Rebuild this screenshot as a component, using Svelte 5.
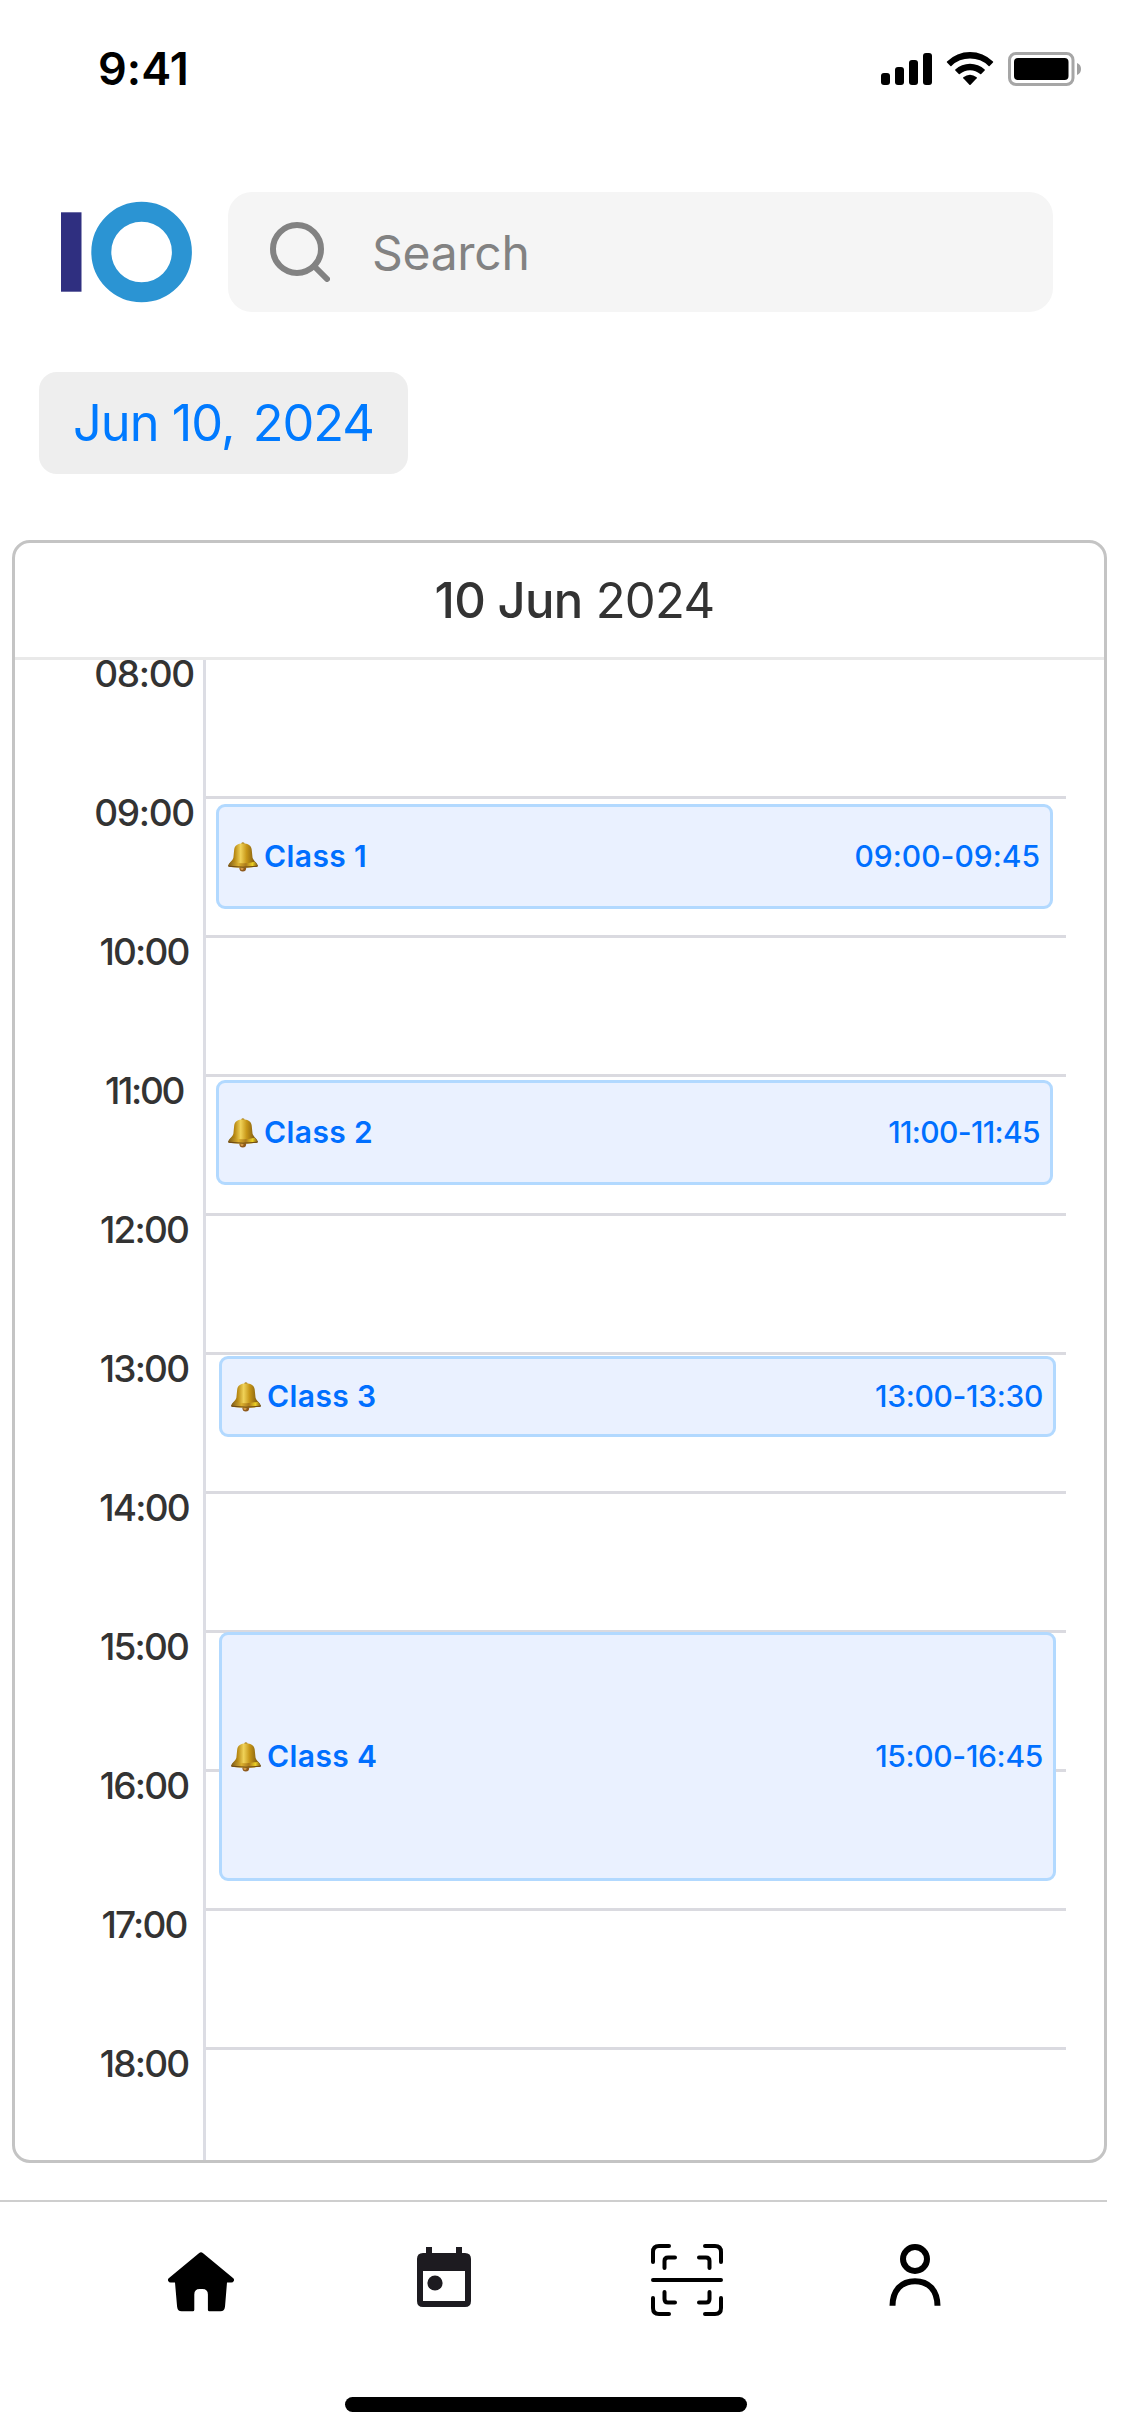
<script>
  const hours = ['08:00', '09:00', '10:00', '11:00', '12:00', '13:00', '14:00', '15:00', '16:00', '17:00', '18:00'];

  // top and height are measured from the start of the schedule body
  const events = [
    { name: 'Class 1', time: '09:00-09:45', left: 201, top: 144, height: 105 },
    { name: 'Class 2', time: '11:00-11:45', left: 201, top: 420, height: 105 },
    { name: 'Class 3', time: '13:00-13:30', left: 204, top: 696, height: 81 },
    { name: 'Class 4', time: '15:00-16:45', left: 204, top: 972, height: 249 }
  ];

  // times with more ones are tracked tighter
  const ones = (text) => text.split('1').length - 1;
</script>

<div class="phone">
  <div class="status">
    <span class="clock">9:41</span>
    <svg class="indicators" width="200" height="34" viewBox="0 0 200 34" aria-hidden="true">
      <rect x="0" y="21" width="9" height="12" rx="3" />
      <rect x="14" y="15" width="9" height="18" rx="3" />
      <rect x="28" y="8" width="9" height="25" rx="3" />
      <rect x="42" y="1" width="9" height="32" rx="3" />
      <path d="M66 9.4A33 33 0 0 1 112 9.4Q112.4 10 112 10.5L108.6 14Q108.1 14.4 107.6 14A26.5 26.5 0 0 0 70.400 14Q69.900 14.400 69.400 14L66 10.500Q65.600 10 66 9.400Z" />
      <path d="M74.300 17.600A21.500 21.500 0 0 1 103.700 17.600Q104.100 18.100 103.700 18.600L100.200 22.100Q99.700 22.500 99.200 22.100A15.200 15.200 0 0 0 78.800 22.100Q78.300 22.500 77.800 22.100L74.300 18.600Q73.900 18.100 74.300 17.600Z" />
      <path d="M82.300 25.200Q89 20.200 95.700 25.200Q96.200 25.700 95.700 26.300L89.600 32.700Q89 33.300 88.400 32.700L82.300 26.300Q81.800 25.700 82.300 25.200Z" />
      <rect x="128.500" y="1.500" width="63.500" height="31" rx="6.500" fill="none" stroke="#a6a6a6" stroke-width="3" />
      <rect x="133" y="6" width="54.500" height="22" rx="4" />
      <path d="M196 11Q200 12.500 200 17T196 23Z" fill="#a0a0a0" />
    </svg>
  </div>

  <div class="topbar">
    <svg class="logo" width="132" height="102" viewBox="0 0 132 102" aria-hidden="true">
      <rect x="0" y="11.300" width="20.500" height="79.400" fill="#2f2f80" />
      <circle cx="80.600" cy="51" r="40.300" fill="none" stroke="#2b94d3" stroke-width="20" />
    </svg>
    <div class="search">
      <svg width="60" height="60" viewBox="0 0 60 60" fill="none" stroke="#828282" stroke-width="6" stroke-linecap="round" aria-hidden="true">
        <circle cx="27" cy="27" r="24" />
        <path d="M44 44L57 57" />
      </svg>
      <span>Search</span>
    </div>
  </div>

  <div class="date">Jun 10, <span class="year">2024</span></div>

  <div class="card">
    <div class="card-head"><b>10 Jun</b> 2024</div>
    <div class="body">
      {#each hours as hour}
        <div class="row">
          <div class="label" style="letter-spacing:{-1.3 - 0.5 * ones(hour)}px">{hour}</div>
          <div class="slot"></div>
        </div>
      {/each}
      {#each events as e}
        <div class="event" style="left:{e.left}px;top:{e.top}px;height:{e.height}px">
          <svg width="30" height="30" viewBox="0 0 30 30" aria-hidden="true">
            <defs>
              <linearGradient id="brass" x1="0" x2="1">
                <stop offset="0" stop-color="#7d5a10" />
                <stop offset=".22" stop-color="#b98a14" />
                <stop offset=".42" stop-color="#f0d258" />
                <stop offset=".62" stop-color="#c79718" />
                <stop offset="1" stop-color="#65450e" />
              </linearGradient>
              <linearGradient id="rim" x1="0" x2="1">
                <stop offset="0" stop-color="#7d5a18" />
                <stop offset=".35" stop-color="#dcb02e" />
                <stop offset=".6" stop-color="#ab7a1c" />
                <stop offset=".82" stop-color="#ecd024" />
                <stop offset="1" stop-color="#7a561a" />
              </linearGradient>
            </defs>
            <circle cx="14.800" cy="26.200" r="3.300" fill="#8f5a1c" />
            <circle cx="14" cy="26.600" r="1.500" fill="#d49a48" />
            <circle cx="14.900" cy="1.900" r="1.700" fill="#a87d18" />
            <path d="M14.900 1.500C20 1.500 23.200 3.200 23.700 7.500L24.500 15.500C25 18.500 29.500 21 29.800 24Q29.500 25.400 15 25.400T.2 24C.5 21 5 18.500 5.400 15.500L6.200 7.500C6.700 3.200 9.800 1.500 14.900 1.500Z" fill="url(#brass)" />
            <path d="M3.600 19.700Q15 22.800 26.600 19.700Q29.600 22 29.800 24Q28.500 25.500 15 25.500T.2 24Q.5 22 3.600 19.700Z" fill="url(#rim)" />
            <path d="M.4 24.200Q15 26.200 29.600 24.200" fill="none" stroke="#704a12" stroke-width="1" />
          </svg>
          <span class="name">{e.name}</span>
          <span class="time" style="letter-spacing:{-0.16 * ones(e.time)}px">{e.time}</span>
        </div>
      {/each}
    </div>
  </div>

  <div class="nav">
    <svg class="icon" viewBox="0 0 72 72" aria-hidden="true">
      <path d="M34.200 9Q36 7.600 37.800 9L68.300 34.300Q69.500 35.500 68.800 37.100Q68 38.600 66.300 38.600H62L60 62.700Q59.400 67.300 55.500 67.300H44.400Q42.900 67.300 42.900 65.800V50.500Q42.900 45 37.400 45H34.700Q29.300 45 29.300 50.500V65.800Q29.300 67.300 27.800 67.300H16.600Q12.600 67.300 12.100 62.700L10 38.600H5.700Q4 38.600 3.200 37.100Q2.500 35.500 3.700 34.300Z" />
    </svg>
    <svg class="icon" viewBox="0 0 72 72" aria-hidden="true">
      <path fill="#1d1b20" fill-rule="evenodd" d="M18 3H24V9H48V3H54V9H57Q63 9 63 15V57Q63 63 57 63H15Q9 63 9 57V15Q9 9 15 9H18ZM15 27V57H57V27Z" />
      <circle cx="27" cy="39" r="7.600" fill="#1d1b20" />
    </svg>
    <svg class="icon" viewBox="0 0 72 72" fill="none" stroke="#000" stroke-width="4" stroke-linecap="round" aria-hidden="true">
      <path d="M18 2H8Q2 2 2 8V18M54 2H64Q70 2 70 8V18M18 70H8Q2 70 2 64V54M54 70H64Q70 70 70 64V54M2 36H70" />
      <path d="M24 13.500H17Q13.500 13.500 13.500 17V24M48 13.500H55Q58.500 13.500 58.500 17V24M24 58.500H17Q13.500 58.500 13.500 55V48M48 58.500H55Q58.500 58.500 58.500 55V48" />
    </svg>
    <svg class="icon person" viewBox="0 0 72 72" fill="none" stroke="#000" stroke-width="6" aria-hidden="true">
      <circle cx="36" cy="15" r="12" />
      <path d="M13.500 61.700C13.800 46 22.500 37.200 36 37.200S58.200 46 58.500 61.700" />
    </svg>
  </div>
  <div class="home-bar"></div>
</div>

<style>
  :global(body) {
    margin: 0;
    background: #fff;
  }
  .phone {
    box-sizing: border-box;
    width: 1125px;
    height: 2436px;
    display: flex;
    flex-direction: column;
    background: #fff;
    font-family: Inter, 'Liberation Sans', sans-serif;
    font-feature-settings: 'calt' 0;
    overflow: hidden;
    white-space: nowrap;
  }
  .status {
    display: flex;
    justify-content: space-between;
    align-items: flex-start;
    padding: 52px 44px 0 98px;
    height: 140px;
    box-sizing: border-box;
  }
  .clock {
    font-size: 45px;
    line-height: 33px;
    font-weight: 600;
    letter-spacing: 0;
  }
  .indicators {
    display: block;
  }
  .topbar {
    display: flex;
    align-items: center;
    height: 120px;
    margin-top: 52px;
    padding: 0 72px 0 61px;
  }
  .logo {
    margin-right: 35px;
    flex: none;
  }
  .search {
    flex: 1;
    height: 120px;
    box-sizing: border-box;
    display: flex;
    align-items: center;
    gap: 42px;
    padding-left: 42px;
    border-radius: 24px;
    background: #f5f5f5;
    color: #828282;
    font-size: 48px;
    letter-spacing: -0.3px;
  }
  .date {
    align-self: flex-start;
    width: 369px;
    height: 102px;
    margin: 60px 0 0 39px;
    border-radius: 18px;
    background: #eee;
    color: #007aff;
    font-size: 50.5px;
    line-height: 102px;
    letter-spacing: -1px;
    text-align: center;
  }
  .year {
    margin-left: 5px;
  }
  .card {
    box-sizing: border-box;
    width: 1095px;
    height: 1623px;
    margin: 66px 0 0 12px;
    border: 3px solid #c4c4c4;
    border-radius: 18px;
    display: flex;
    flex-direction: column;
  }
  .card-head {
    box-sizing: border-box;
    height: 117px;
    padding-left: 30px;
    border-bottom: 3px solid #e9e9e9;
    color: #333;
    font-size: 49px;
    line-height: 115px;
    letter-spacing: -0.7px;
    text-align: center;
  }
  .card-head b {
    font-weight: 500;
  }
  .body {
    position: relative;
    flex: 1;
  }
  .row {
    display: flex;
    height: 139px;
  }
  .row:first-child {
    height: 136px;
  }
  .row:nth-child(11) {
    height: 113px;
  }
  .label {
    box-sizing: border-box;
    width: 191px;
    padding: 3px 0 0 70px;
    border-right: 3px solid #dcdde4;
    color: #333;
    font-size: 37px;
    line-height: 27px;
    font-weight: 500;
    text-align: center;
  }
  .slot {
    width: 860px;
    box-sizing: border-box;
    border-top: 3px solid #dadae0;
  }
  .row:first-child .label {
    padding-top: 0;
  }
  .row:first-child .slot {
    border-top: 0;
  }
  .event {
    position: absolute;
    box-sizing: border-box;
    width: 837px;
    display: flex;
    align-items: center;
    padding: 0 10px 0 9px;
    border: 3px solid #b2d9ff;
    border-radius: 9px;
    background: #eaf1ff;
    color: #006fff;
    font-size: 30px;
  }
  .name {
    margin-left: 6px;
    padding-bottom: 2px;
    font-weight: 600;
    letter-spacing: 0.4px;
  }
  .time {
    margin-left: auto;
    padding-bottom: 2px;
    font-weight: 500;
  }
  .nav {
    box-sizing: border-box;
    width: 1107px;
    height: 197px;
    margin-top: 37px;
    padding: 42px 0 0 165px;
    border-top: 2px solid #cecece;
    display: flex;
    align-items: flex-start;
    gap: 171px;
  }
  .icon {
    width: 72px;
    height: 72px;
    flex: none;
  }
  .person {
    margin-left: -15px;
  }
  .home-bar {
    width: 402px;
    height: 15px;
    margin-left: 345px;
    border-radius: 7.5px;
    background: #000;
  }
</style>
